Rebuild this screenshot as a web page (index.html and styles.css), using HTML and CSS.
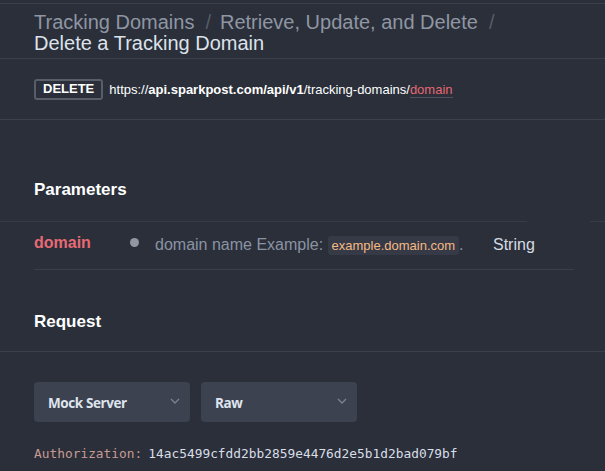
FILE: index.html
```html
<!DOCTYPE html>
<html>
<head>
<meta charset="utf-8">
<link rel="stylesheet" href="styles.css">
</head>
<body>
<div class="page">
  <header class="head">
    <div class="crumbs">
      <span class="crumb">Tracking Domains</span><span class="sep">/</span><span class="crumb">Retrieve, Update, and Delete</span><span class="sep">/</span>
    </div>
    <div class="title">Delete a Tracking Domain</div>
  </header>
  <section class="endpoint">
    <span class="method">DELETE</span>
    <span class="url">https://<b>api.sparkpost.com/api/v1</b>/tracking-domains/<span class="pathvar">domain</span></span>
  </section>
  <section class="params">
    <h2 class="section-title">Parameters</h2>
    <div class="rule-split"><span class="rs-a"></span><span class="rs-b"></span></div>
    <div class="param-row">
      <span class="pname">domain</span>
      <span class="dot"></span>
      <span class="pdesc">domain name Example: <code class="chip">example.domain.com</code>.</span>
      <span class="ptype">String</span>
    </div>
  </section>
  <section class="request">
    <h2 class="section-title">Request</h2>
  </section>
  <section class="controls">
    <div class="selects">
      <div class="select"><span>Mock Server</span><svg width="10" height="6" viewBox="0 0 10 6"><path d="M1 1l4 4 4-4" fill="none" stroke="#7c8290" stroke-width="1.3"/></svg></div>
      <div class="select"><span>Raw</span><svg width="10" height="6" viewBox="0 0 10 6"><path d="M1 1l4 4 4-4" fill="none" stroke="#7c8290" stroke-width="1.3"/></svg></div>
    </div>
    <div class="auth"><span class="akey">Authorization:</span><span class="aval">14ac5499cfdd2bb2859e4476d2e5b1d2bad079bf</span></div>
  </section>
</div>
</body>
</html>
```
FILE: styles.css
```css
html, body {
  margin: 0;
  padding: 0;
  background: #2a2f3a;
  overflow: hidden;
}
.page {
  width: 605px;
  height: 471px;
  background: #2a2f3a;
  font-family: "Liberation Sans", Arial, sans-serif;
  border-top: 1px solid #3a3f4a;
  margin-top: 3px;
}
.head {
  padding: 7px 34px 0 34px;
  height: 55px;
  border-bottom: 1px solid #3b404b;
  box-sizing: border-box;
}
.crumbs {
  font-size: 20px;
  line-height: 22px;
  color: #8f96a3;
  white-space: nowrap;
}
.sep {
  color: #565c68;
  margin: 0 9px 0 11px;
}
.title {
  font-size: 20px;
  line-height: 21px;
  color: #dde2ea;
}
.endpoint {
  height: 61px;
  padding: 0 34px;
  display: flex;
  align-items: center;
  gap: 6px;
  border-bottom: 1px solid #3b404b;
  box-sizing: border-box;
}
.method {
  border: 2px solid #575d69;
  border-radius: 3px;
  color: #ffffff;
  font-weight: bold;
  font-size: 13px;
  height: 21px;
  line-height: 18px;
  padding: 0 7px;
  box-sizing: border-box;
  display: inline-flex;
  align-items: center;
}
.url {
  color: #ffffff;
  font-size: 13px;
}
.url b { font-weight: bold; }
.pathvar {
  color: #e56873;
  border-bottom: 1px solid #4b5160;
}
.params {
  padding-top: 61px;
}
.section-title {
  margin: 0;
  padding: 0 34px;
  font-size: 17px;
  line-height: 18px;
  font-weight: bold;
  color: #ffffff;
}
.rule-split {
  display: flex;
  margin-top: 22px;
  height: 1px;
}
.rs-a { width: 527px; background: #363b46; }
.rs-b { width: 15px; margin-left: 63px; background: #363b46; }
.param-row {
  margin: 0 31px 0 34px;
  height: 48px;
  border-bottom: 1px solid #3a3f4a;
  display: flex;
  align-items: center;
  font-size: 16px;
  padding-bottom: 2px;
  box-sizing: border-box;
}
.pname {
  color: #e86a74;
  font-weight: bold;
  width: 96px;
  margin-top: -4px;
}
.dot {
  width: 9px;
  height: 9px;
  border-radius: 50%;
  background: #9097a3;
  margin-right: 16px;
  margin-top: -4px;
}
.pdesc {
  color: #8b93a3;
  width: 338px;
  white-space: nowrap;
}
.chip {
  font-family: "Liberation Sans", Arial, sans-serif;
  font-size: 13px;
  color: #f5b984;
  background: #353a46;
  border-radius: 3px;
  padding: 2px 4px;
}
.ptype {
  color: #d5dbe4;
  font-size: 16px;
}
.request {
  padding-top: 43px;
  height: 82px;
  box-sizing: border-box;
  border-bottom: 1px solid #3a3f4a;
}
.controls {
  padding: 30px 34px 0 34px;
}
.selects {
  display: flex;
  gap: 11px;
}
.select {
  width: 156px;
  height: 40px;
  background: #3d4250;
  border-radius: 4px;
  display: flex;
  align-items: center;
  justify-content: space-between;
  padding: 0 10px 0 14px;
  box-sizing: border-box;
  font-family: "Open Sans", sans-serif;
  font-weight: 700;
  font-size: 13.5px;
  letter-spacing: -0.4px;
  color: #dfe5ee;
}
.select span { margin-top: 1px; }
.select svg { margin-top: -2px; }
.auth {
  margin-top: 24px;
  font-family: "DejaVu Sans Mono", monospace;
  font-size: 12.85px;
  white-space: nowrap;
}
.akey { color: #c79a93; margin-right: 6px; }
.aval { color: #d8dde6; }
```
